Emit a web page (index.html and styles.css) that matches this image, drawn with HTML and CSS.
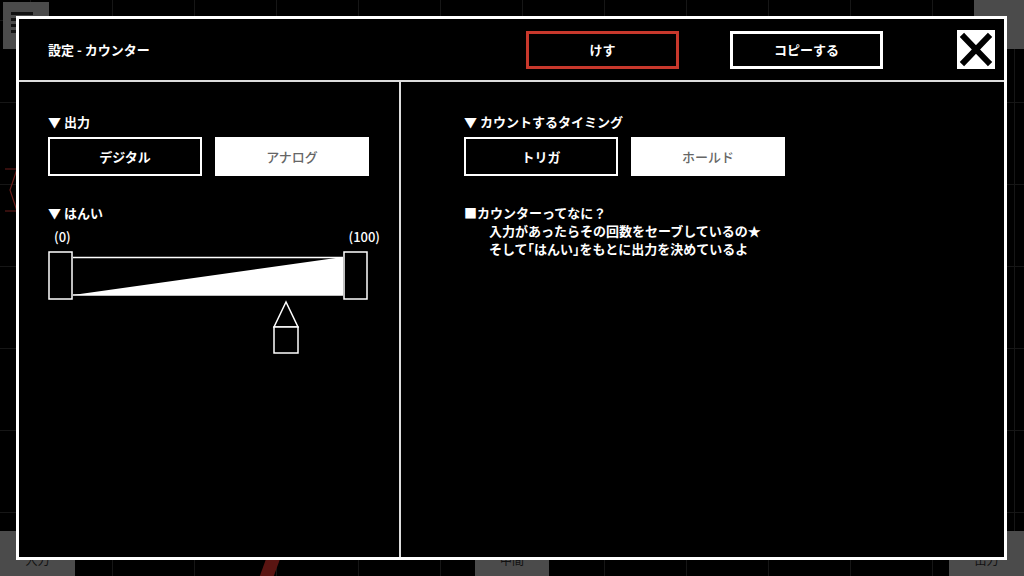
FILE: index.html
```html
<!DOCTYPE html>
<html lang="ja">
<head>
    <meta charset="UTF-8">
    <meta name="viewport" content="width=device-width, initial-scale=1.0">
    <title>設定 - カウンター</title>
    <link rel="stylesheet" href="styles.css">
</head>
<body>
<div class="stage">

    <!--fundo (editor atras do modal)-->
    <div class="bg-grid"></div>
    <div class="tile tile-menu">
        <span></span><span></span><span></span><span></span>
    </div>
    <div class="tile tile-tr"></div>
    <div class="tile tile-bl">入力</div>
    <div class="tile tile-bc">中間</div>
    <div class="tile tile-br">出力</div>
    <svg class="bg-mark" width="14" height="44" viewBox="0 0 14 44">
        <path d="M1 1 L13 1 L6 22 L13 43 L1 43" fill="none" stroke="#6b1d1a" stroke-width="1.2"/>
    </svg>
    <div class="bg-red"></div>

    <!--MODAL-->
    <div class="modal">
        <header class="modal-head">
            <h1 class="modal-title">設定 - カウンター</h1>
            <button class="btn btn-danger">けす</button>
            <button class="btn btn-copy">コピーする</button>
            <button class="close" aria-label="close">
                <svg width="38" height="39" viewBox="0 0 38 39">
                    <path d="M7 7 L31 32 M31 7 L7 32" stroke="#000" stroke-width="6" stroke-linecap="square"/>
                </svg>
            </button>
        </header>

        <div class="modal-body">
            <!--coluna esquerda-->
            <section class="pane pane-left">
                <div class="label">▼ 出力</div>
                <div class="choice">
                    <button class="opt opt-on">デジタル</button>
                    <button class="opt opt-off">アナログ</button>
                </div>

                <div class="label label-gap">▼ はんい</div>
                <div class="range-labels">
                    <span>(0)</span>
                    <span>(100)</span>
                </div>
                <svg class="range" width="330" height="104" viewBox="0 0 330 104">
                    <line x1="25" y1="6.5" x2="295" y2="6.5" stroke="#fff" stroke-width="1.5"/>
                    <line x1="25" y1="44" x2="295" y2="44" stroke="#fff" stroke-width="1.5"/>
                    <polygon points="25,44 295,6 295,44" fill="#fff"/>
                    <rect x="1" y="1" width="23" height="47" fill="#000" stroke="#fff" stroke-width="1.5"/>
                    <rect x="296" y="1" width="23" height="47" fill="#000" stroke="#fff" stroke-width="1.5"/>
                    <polygon points="238,51 226,76 250,76" fill="#000" stroke="#fff" stroke-width="1.5"/>
                    <rect x="226" y="76" width="24" height="26" fill="#000" stroke="#fff" stroke-width="1.5"/>
                </svg>
            </section>

            <!--coluna direita-->
            <section class="pane pane-right">
                <div class="label">▼ カウントするタイミング</div>
                <div class="choice">
                    <button class="opt opt-on">トリガ</button>
                    <button class="opt opt-off">ホールド</button>
                </div>

                <div class="info">
                    <p>■カウンターってなに？</p>
                    <p class="indent">入力があったらその回数をセーブしているの★</p>
                    <p class="indent">そして｢はんい｣をもとに出力を決めているよ</p>
                </div>
            </section>
        </div>
    </div>
</div>
</body>
</html>
```
FILE: styles.css
```css
/* ---------- BASE ---------- */
* { box-sizing:border-box; }

body {
    margin:0;
    background:#000;
    color:#fff;
    font-family:"Noto Sans CJK JP", "Noto Sans", sans-serif;
    font-size:13px;
}

.stage {
    position:relative;
    width:1024px;
    height:576px;
    overflow:hidden;
    background:#000;
}

/* ---------- FUNDO (editor) ---------- */
.bg-grid {
    position:absolute;
    inset:0;
    background-image:
        linear-gradient(to right, #161616 1px, transparent 1px),
        linear-gradient(to bottom, #161616 1px, transparent 1px);
    background-size:82px 82px;
    background-position:30px 20px;
}

.tile {
    position:absolute;
    background:#4b4b4b;
    color:#111;
    font-size:12px;
    text-align:center;
}

.tile-menu { left:3px; top:2px; width:46px; height:47px; padding:10px 0 0 8px; }
.tile-menu span {
    display:block;
    width:22px;
    height:3px;
    background:#111;
    margin-bottom:3px;
}
.tile-tr { left:974px; top:0; width:50px; height:49px; }
.tile-bl { left:0; top:531px; width:75px; height:45px; padding-top:20px; }
.tile-bc { left:475px; top:531px; width:74px; height:45px; padding-top:20px; }
.tile-br { left:949px; top:531px; width:75px; height:45px; padding-top:20px; }

.bg-mark { position:absolute; left:4px; top:168px; }

.bg-red {
    position:absolute;
    left:262px;
    top:560px;
    width:14px;
    height:20px;
    background:#5a1512;
    transform:skewX(-20deg);
}

/* ---------- MODAL ---------- */
.modal {
    position:absolute;
    left:16px;
    top:16px;
    width:991px;
    height:544px;
    border:3px solid #fff;
    background:#000;
    display:flex;
    flex-direction:column;
}

.modal-head {
    height:63px;
    flex-shrink:0;
    border-bottom:2px solid #ddd;
    display:flex;
    align-items:center;
    padding:0 9px 0 29px;
}

.modal-title {
    flex:1;
    margin:0;
    font-size:13px;
    font-weight:700;
}

.btn {
    width:153px;
    height:38px;
    background:#000;
    color:#fff;
    font-family:inherit;
    font-size:13px;
    font-weight:700;
    border:3px solid #fff;
    padding:0;
}

.btn-danger { border-color:#c8382c; }
.btn-copy   { margin-left:51px; }

.close {
    margin-left:74px;
    width:38px;
    height:39px;
    padding:0;
    border:0;
    background:#fff;
    display:flex;
}

/* ---------- CORPO ---------- */
.modal-body {
    flex:1;
    display:flex;
}

.pane { padding-top:31px; }

.pane-left {
    width:382px;
    padding-left:29px;
    border-right:2px solid #ddd;
}

.pane-right {
    flex:1;
    padding-left:63px;
}

.label {
    font-weight:700;
    line-height:17px;
    margin-bottom:7px;
}

.label-gap { margin-top:28px; }

.choice {
    display:flex;
    gap:13px;
}

.opt {
    width:154px;
    height:39px;
    font-family:inherit;
    font-size:13px;
    padding:0;
}

.opt-on {
    background:#000;
    color:#fff;
    font-weight:700;
    border:2px solid #fff;
}

.opt-off {
    background:#fff;
    color:#666;
    font-weight:500;
    border:2px solid #fff;
}

/* 🔧 FAIXA (range) */
.range-labels {
    width:332px;
    display:flex;
    justify-content:space-between;
    font-weight:500;
    line-height:17px;
    margin-top:0;
    padding-left:6px;
}

.range {
    display:block;
    margin-top:6px;
}

/* 🔧 TEXTO DE AJUDA */
.info {
    margin-top:28px;
    font-weight:700;
    line-height:18px;
}

.info p { margin:0; }
.info .indent { padding-left:25px; }
```
